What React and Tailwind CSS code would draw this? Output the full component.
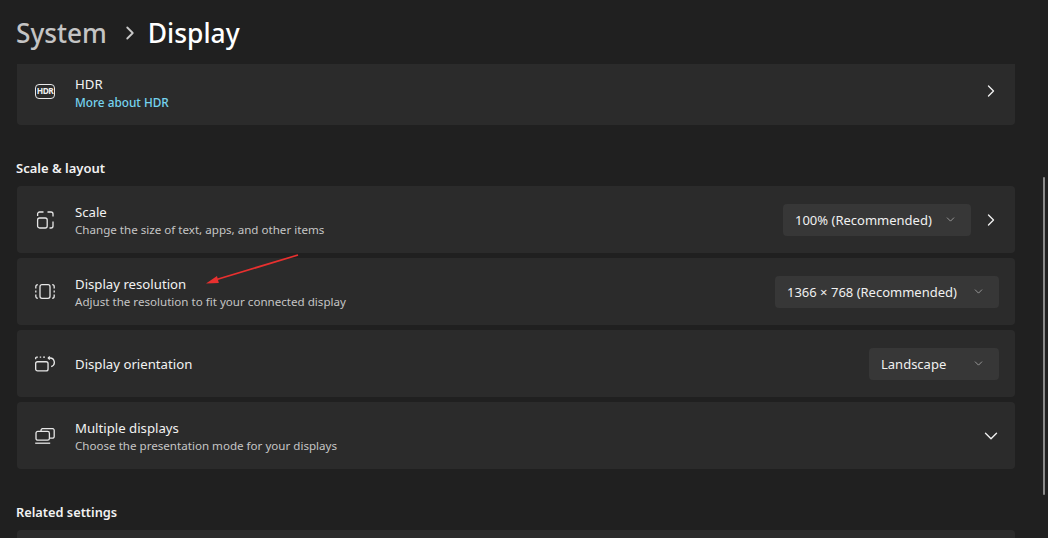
import { ChevronRight, ChevronDown } from 'lucide-react'

const FONT = { fontFamily: '"Noto Sans", sans-serif' }

function HdrIcon() {
  return (
    <div className="w-5 h-[15px] shrink-0 rounded-[4px] border-[1.5px] border-[#e8e8e8] flex items-center justify-center">
      <span className="text-[8.4px] leading-none font-bold text-[#f0f0f0] tracking-[-0.5px]">HDR</span>
    </div>
  )
}

function ScaleIcon() {
  return (
    <svg width="18" height="18" viewBox="0 0 18 18" fill="none" stroke="#e6e6e6" strokeWidth="1.3">
      <path d="M1.6 5V3a2 2 0 0 1 2-2H7.5M11.5 1H15a2 2 0 0 1 2 2v2.5M17 10.5V15a2 2 0 0 1-2 2h-1.5" />
      <rect x="1.6" y="7" width="9.6" height="10" rx="2" />
    </svg>
  )
}

function ResolutionIcon() {
  return (
    <svg width="20" height="15" viewBox="0 0 20 15" fill="none" stroke="#e6e6e6" strokeWidth="1.3">
      <rect x="5" y="0.7" width="10" height="13.6" rx="2" />
      <path d="M2.8 0.7A2 2 0 0 0 .8 2.7V4.6M.8 6.5v2M.8 10.4v1.9a2 2 0 0 0 2 2M17.2 0.7a2 2 0 0 1 2 2V4.6M19.2 6.5v2M19.2 10.4v1.9a2 2 0 0 1-2 2" />
    </svg>
  )
}

function OrientationIcon() {
  return (
    <svg width="21" height="16" viewBox="0 0 21 16" fill="none" stroke="#e6e6e6" strokeWidth="1.4">
      <rect x="0.7" y="5.6" width="13" height="9.6" rx="2" />
      <path d="M.7 3V1.8A1 1 0 0 1 1.7 .8H3M5 .8h1.5M8.5 .8h2" />
      <path d="M14 1.7h1.5a4.6 4.6 0 0 1 1.5 9" />
      <path d="M15.5 .2 14 1.7l1.5 1.5" />
    </svg>
  )
}

function MultiIcon() {
  return (
    <svg width="20" height="16" viewBox="0 0 20 16" fill="none" stroke="#e6e6e6" strokeWidth="1.3">
      <path d="M6 3V2.4A1.8 1.8 0 0 1 7.8 .6h9.6a1.8 1.8 0 0 1 1.8 1.8v6a1.8 1.8 0 0 1-1.8 1.8H15" />
      <rect x="1" y="3.4" width="13.4" height="8.8" rx="1.8" />
      <path d="M.2 15.2h15" />
    </svg>
  )
}

function Select({ label, width }) {
  return (
    <div className={`${width} h-8 rounded-[4px] bg-[#373737] flex items-center justify-between pl-3 pr-[14px]`}>
      <span className="pt-[2px] text-[13px] text-[#f0f0f0] whitespace-nowrap">{label}</span>
      <ChevronDown size={13} strokeWidth={1.2} className="text-[#c8c8c8]" />
    </div>
  )
}

function Row({ icon, title, sub, height = 'h-[67px]', rounded = 'rounded-[4px]', extra = '', children }) {
  return (
    <div className={`${height} ${rounded} ${extra} bg-[#2b2b2b] flex items-center pl-[18px] pr-4`}>
      <div className="w-5 flex justify-center">{icon}</div>
      <div className={`ml-5 flex-1 ${sub ? 'pt-[3px]' : ''}`}>
        <div className="text-[13.2px] leading-[18px] text-[#f2f2f2]">{title}</div>
        {sub}
      </div>
      {children}
    </div>
  )
}

function Sub({ children }) {
  return <div className="text-[11.6px] leading-[18px] text-[#c5c5c5]">{children}</div>
}

export default function App() {
  return (
    <div className="relative h-[538px] overflow-hidden bg-[#202020]" style={FONT}>
      <div className="h-16 flex items-center pl-4 pt-[4px]">
        <span className="text-[26.2px] font-medium text-[#c4c4c4]">System</span>
        <ChevronRight size={22} strokeWidth={2} className="ml-3 -mt-[2px] text-[#c8c8c8]" />
        <span className="ml-[7px] text-[26.4px] font-medium text-white">Display</span>
      </div>

      <div className="ml-[17px] w-[998px]">
        <Row
          icon={<HdrIcon />}
          title="HDR"
          height="h-[61px]"
          rounded="rounded-b-[4px]"
          extra="pb-[7px]"
          sub={<div className="text-[11.8px] leading-[18px] font-medium text-[#76d3ef]">More about HDR</div>}
        >
          <ChevronRight size={20} strokeWidth={1.6} className="-mr-[2px] text-[#f0f0f0]" />
        </Row>

        <h2 className="-ml-px mt-[34px] h-[27px] text-[13px] leading-[18px] font-semibold text-[#f2f2f2]">Scale &amp; layout</h2>

        <div className="flex flex-col gap-[5px]">
          <Row icon={<ScaleIcon />} title="Scale" sub={<Sub>Change the size of text, apps, and other items</Sub>}>
            <Select label="100% (Recommended)" width="w-[188px]" />
            <ChevronRight size={20} strokeWidth={1.6} className="ml-[10px] -mr-[2px] text-[#f0f0f0]" />
          </Row>
          <Row icon={<ResolutionIcon />} title="Display resolution" sub={<Sub>Adjust the resolution to fit your connected display</Sub>}>
            <Select label="1366 × 768 (Recommended)" width="w-[224px]" />
          </Row>
          <Row icon={<OrientationIcon />} title="Display orientation">
            <Select label="Landscape" width="w-[130px]" />
          </Row>
          <Row icon={<MultiIcon />} title="Multiple displays" sub={<Sub>Choose the presentation mode for your displays</Sub>}>
            <ChevronDown size={22} strokeWidth={1.5} className="-mr-[3px] text-[#f0f0f0]" />
          </Row>
        </div>

        <h2 className="-ml-px mt-[34px] h-[27px] text-[12.8px] leading-[18px] font-semibold text-[#f2f2f2]">Related settings</h2>
        <div className="h-10 rounded-t-[4px] bg-[#2b2b2b]" />
      </div>

      {/* red annotation arrow */}
      <svg className="absolute left-[200px] top-[250px]" width="104" height="40" viewBox="0 0 104 40" fill="none">
        <path d="M98 5 15 30" stroke="#e8302f" strokeWidth="1.8" />
        <path d="M6 33.5 17 26 18.8 33Z" fill="#e8302f" />
      </svg>

      {/* scrollbar */}
      <div className="absolute right-[3px] top-[177px] h-[318px] w-[2px] rounded-full bg-[#8a8a8a]" />
    </div>
  )
}
